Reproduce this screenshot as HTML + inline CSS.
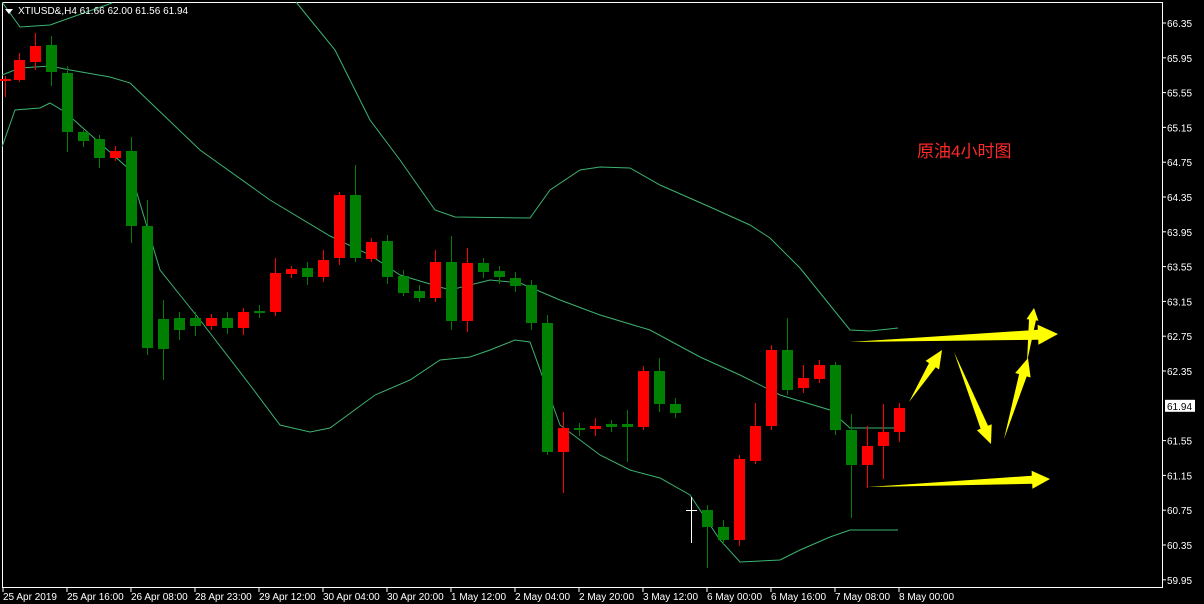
<!DOCTYPE html>
<html><head><meta charset="utf-8"><style>
html,body{margin:0;padding:0;background:#000;width:1204px;height:604px;overflow:hidden}
svg{display:block}
text{font-family:"Liberation Sans","DejaVu Sans",sans-serif}
</style></head><body>
<svg id="s" width="1204" height="604" xmlns="http://www.w3.org/2000/svg">
<rect width="1204" height="604" fill="#000"/>
<rect x="2.5" y="2.5" width="1160" height="585" fill="none" stroke="#fff" stroke-width="1"/>
<g id="bands" fill="none" stroke="#3cb371" stroke-width="1"></g>
<g id="c"></g>
<g id="arr" fill="#ffff00"></g>
<g id="ax" font-size="10" fill="#fff"></g>
<polygon points="5,9 13,9 9,14" fill="#fff"/>
<text x="18" y="14" font-size="10" fill="#fff">XTIUSD&amp;,H4  61.66 62.00 61.56 61.94</text>
<text x="917" y="157" font-size="17" fill="#ff2a2a" font-family="'Liberation Sans','Noto Sans CJK SC',sans-serif">原油4小时图</text>
</svg>
<script>
const NS="http://www.w3.org/2000/svg";
function el(p,t,a,txt){const e=document.createElementNS(NS,t);for(const k in a)e.setAttribute(k,a[k]);if(txt)e.textContent=txt;document.getElementById(p).appendChild(e);return e;}
const labs=["66.35","65.95","65.55","65.15","64.75","64.35","63.95","63.55","63.15","62.75","62.35","61.94","61.55","61.15","60.75","60.35","59.95"];
labs.forEach((l,i)=>{const y=23+i*34.8;
 if(l==="61.94"){el("ax","rect",{x:1165,y:y-6,width:30,height:12,fill:"#fff"});el("ax","text",{x:1167,y:y+4,fill:"#000"},l);}
 else{el("ax","line",{x1:1162,y1:y,x2:1166,y2:y,stroke:"#fff"});el("ax","text",{x:1167,y:y+4},l);}
});
const tl=["25 Apr 2019","25 Apr 16:00","26 Apr 08:00","28 Apr 23:00","29 Apr 12:00","30 Apr 04:00","30 Apr 20:00","1 May 12:00","2 May 04:00","2 May 20:00","3 May 12:00","6 May 00:00","6 May 16:00","7 May 08:00","8 May 00:00"];
tl.forEach((l,i)=>{const x=3+i*64;el("ax","line",{x1:x,y1:588,x2:x,y2:592,stroke:"#fff"});el("ax","text",{x:x,y:600},l);});
const up=[[2,2],[20,27],[50,25],[112,3]],up2=[[296,2],[335,50],[370,120],[400,160],[435,210],[455,217],[530,218],[550,190],[580,170],[600,167],[630,168],[660,185],[710,207],[750,225],[770,238],[800,268],[850,330],[870,331],[898,328]];
const mid=[[2,75],[20,68],[50,66],[70,70],[110,77],[130,83],[200,150],[270,200],[330,236],[370,255],[400,275],[450,290],[490,280],[520,283],[560,300],[600,315],[650,330],[700,357],[740,375],[780,395],[830,410],[850,428],[898,428]];
const lo=[[2,147],[15,110],[40,108],[50,103],[65,112],[130,170],[160,270],[200,320],[250,385],[280,425],[310,432],[330,428],[375,395],[410,380],[440,360],[470,357],[490,350],[515,340],[530,342],[560,425],[600,455],[630,470],[660,478],[690,495],[720,540],[740,562],[780,560],[800,550],[830,537],[850,530],[898,530]];
[up,up2,mid,lo].forEach(p=>el("bands","polyline",{points:p.map(q=>q.join(",")).join(" ")}));
const C=[[5,79,81,76,97,"r"],[19,60,80,53,82,"r"],[35,46,62,33,70,"r"],[51,45,72,36,86,"g"],[67,73,132,66,152,"g"],[83,132,141,130,147,"g"],[99,139,158,135,168,"g"],[115,151,158,146,161,"r"],[131,151,226,137,243,"g"],[147,226,348,200,355,"g"],[163,319,349,300,380,"g"],[179,318,330,312,340,"g"],[195,318,326,312,336,"g"],[211,318,326,314,330,"r"],[227,318,328,312,334,"g"],[243,312,328,308,335,"r"],[259,311,313,305,318,"g"],[275,273,312,258,316,"r"],[291,269,274,266,278,"r"],[307,268,277,262,285,"g"],[323,260,277,250,282,"r"],[339,195,258,192,265,"r"],[355,195,258,165,262,"g"],[371,242,259,238,262,"r"],[387,241,277,235,284,"g"],[403,276,293,270,296,"g"],[419,291,298,285,302,"g"],[435,262,298,250,302,"r"],[451,262,321,236,330,"g"],[467,263,321,248,332,"r"],[483,263,272,258,278,"g"],[499,271,277,266,284,"g"],[515,278,286,272,292,"g"],[531,285,323,280,330,"g"],[547,323,452,315,455,"g"],[563,428,452,412,493,"r"],[579,428,430,423,436,"g"],[595,426,429,418,436,"r"],[611,424,427,420,432,"g"],[627,424,427,410,462,"g"],[643,371,427,366,430,"r"],[659,371,404,358,412,"g"],[675,404,413,398,418,"g"],[691,510,512,497,543,"w"],[707,510,527,505,568,"g"],[723,527,540,520,544,"g"],[739,459,540,455,546,"r"],[755,426,461,403,464,"r"],[771,350,426,345,430,"r"],[787,350,390,318,395,"g"],[803,378,388,365,393,"r"],[819,365,379,360,383,"r"],[835,365,430,362,435,"g"],[851,430,465,414,518,"g"],[867,446,465,426,488,"r"],[883,432,446,404,479,"r"],[899,408,432,403,442,"r"]];
C.forEach(([x,t,b,wt,wb,c])=>{const col=c==="r"?"#ff0000":c==="g"?"#008000":"#ffffff";
 el("c","line",{x1:x+0.5,y1:wt,x2:x+0.5,y2:wb,stroke:col});
 if(c==="w")el("c","line",{x1:x-5,y1:t+0.5,x2:x+6,y2:t+0.5,stroke:col});
 else el("c","rect",{x:x-5,y:t,width:11,height:Math.max(1,b-t),fill:col});});
function arrow(tx,ty,px,py,w,L,H){const dx=px-tx,dy=py-ty,len=Math.hypot(dx,dy),ux=dx/len,uy=dy/len,nx=-uy,ny=ux;
 const bx=px-ux*L,by=py-uy*L;
 const pts=[[tx,ty],[bx+nx*w/2,by+ny*w/2],[bx+nx*H,by+ny*H],[px,py],[bx-nx*H,by-ny*H],[bx-nx*w/2,by-ny*w/2]];
 el("arr","polygon",{points:pts.map(q=>q.map(v=>v.toFixed(1)).join(",")).join(" ")});}
arrow(850,342,1058,334,10,20,10);
arrow(868,487,1050,479,8,18,9);
arrow(909,402,942,350,8,18,8);
arrow(954,352,991,444,8,18,8);
arrow(1004,439,1028,358,8,18,8);
arrow(1027,362,1034,308,7,12,6);
</script>
</body></html>
